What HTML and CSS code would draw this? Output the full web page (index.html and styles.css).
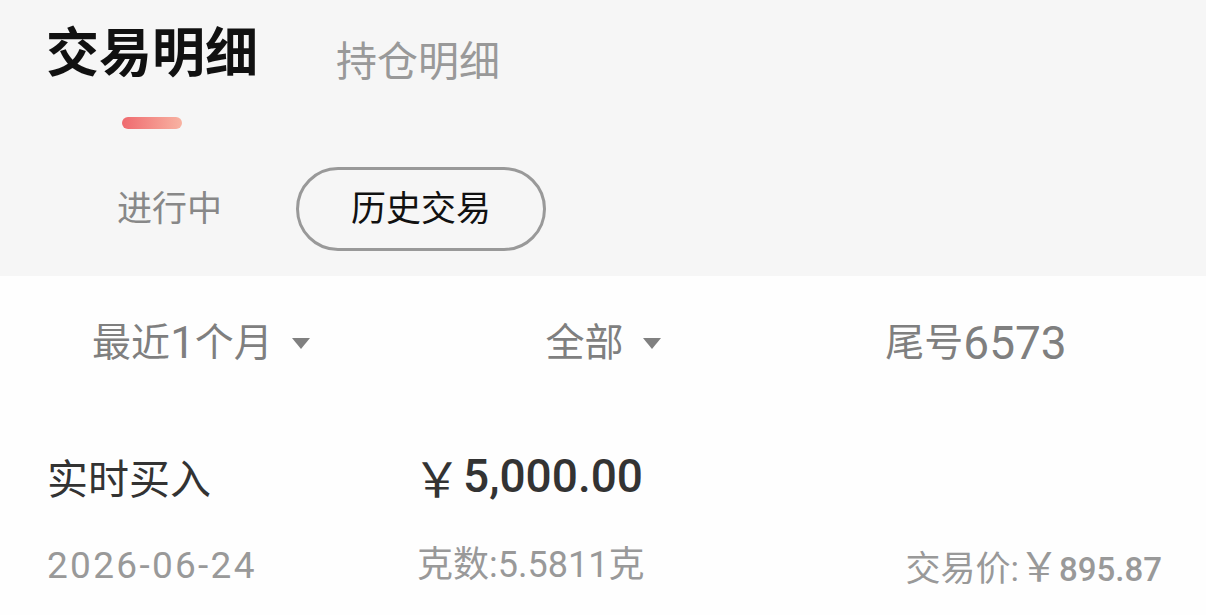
FILE: index.html
```html
<!DOCTYPE html>
<html lang="zh-CN">
<head>
<meta charset="utf-8">
<link rel="stylesheet" href="styles.css">
</head>
<body>
<div class="page">
  <header class="header">
    <nav class="tabs">
      <div class="tab tab-active">
        <span class="tab-label">交易明细</span>
        <span class="tab-indicator"></span>
      </div>
      <div class="tab">
        <span class="tab-label">持仓明细</span>
      </div>
    </nav>
    <div class="subtabs">
      <span class="subtab">进行中</span>
      <span class="subtab subtab-active">历史交易</span>
    </div>
  </header>
  <section class="filters">
    <div class="filter filter-period">最近<span class="num">1</span>个月<span class="caret"></span></div>
    <div class="filter filter-type">全部<span class="caret"></span></div>
    <div class="filter filter-card">尾号<span class="num">6573</span></div>
  </section>
  <section class="record">
    <div class="record-line record-main">
      <span class="col col-left record-title">实时买入</span>
      <span class="col col-mid record-amount"><span class="yen">￥</span>5,000.00</span>
      <span class="col col-right"></span>
    </div>
    <div class="record-line record-sub">
      <span class="col col-left record-date">2026-06-24</span>
      <span class="col col-mid record-weight">克数:<span class="lat">5.5811</span>克</span>
      <span class="col col-right record-price">交易价:<span class="yen-s">￥</span><b class="price">895.87</b></span>
    </div>
  </section>
</div>
</body>
</html>
```

FILE: styles.css
```css
* { box-sizing: border-box; }
html, body { margin: 0; padding: 0; }
body {
  width: 1206px;
  height: 615px;
  overflow: hidden;
  background: #fefefe;
  font-family: Roboto, "Noto Sans CJK SC", sans-serif;
}
.page { display: flex; flex-direction: column; }

.header {
  background: #f6f6f6;
  height: 276px;
  padding-top: 28px;
}
.tabs {
  display: flex;
  align-items: flex-start;
  padding-left: 46px;
  gap: 78px;
}
.tab {
  display: flex;
  flex-direction: column;
  align-items: center;
}
.tab-label {
  font-size: 41px;
  line-height: 1;
  color: #999;
  margin-top: 14px;
}
.tab-active .tab-label {
  font-size: 53px;
  font-weight: 700;
  color: #111;
  margin-top: 0;
}
.tab-indicator {
  width: 60px;
  height: 12px;
  border-radius: 6px;
  margin-top: 36px;
  background: linear-gradient(90deg, #ef6a6f, #f8b3a2);
}
.subtabs {
  display: flex;
  align-items: center;
  padding-left: 62px;
  margin-top: 38px;
  gap: 19px;
}
.subtab {
  font-size: 35px;
  line-height: 1;
  color: #888;
  padding: 22px 52px 21px;
  border: 3px solid transparent;
  border-radius: 42px;
}
.subtab-active {
  color: #111;
  border-color: #999;
}

.filters {
  display: grid;
  grid-template-columns: repeat(3, 1fr);
  height: 140px;
  align-items: center;
  padding-bottom: 6px;
  color: #7f7f7f;
  font-size: 39px;
}
.filter {
  display: flex;
  align-items: center;
  justify-content: center;
  line-height: 1;
}
.filter .num { font-size: 44px; }
.filter-card { padding-right: 58px; }
.filter-card .num { font-size: 46px; }
.caret {
  width: 0;
  height: 0;
  border-left: 9px solid transparent;
  border-right: 9px solid transparent;
  border-top: 11px solid #808080;
  margin-left: 19px;
}

.record {
  display: flex;
  flex-direction: column;
  padding: 0 44px 0 47px;
}
.record-line {
  display: flex;
  align-items: center;
  line-height: 1;
}
.record-main { height: 60px; margin-top: 30px; }
.record-sub { height: 50px; margin-top: 34px; }
.col-left { width: 366px; }
.col-mid { width: 384px; }
.col-right { flex: 1; text-align: right; }
.record-title {
  font-size: 41px;
  color: #333;
  padding-top: 8px;
}
.record-amount {
  font-size: 46px;
  font-weight: 500;
  color: #333;
  display: flex;
  align-items: center;
}
.yen {
  font-family: "Noto Sans CJK SC", sans-serif;
  font-size: 48px;
  font-weight: 400;
  margin-right: 2px;
}
.record-date {
  font-size: 37px;
  color: #999;
  letter-spacing: 2.3px;
}
.record-weight {
  font-size: 36px;
  color: #999;
  padding-left: 4px;
}
.record-price {
  font-size: 35px;
  color: #999;
}
.yen-s {
  font-family: "Noto Sans CJK SC", sans-serif;
  font-size: 40px;
}
.price { font-weight: 500; font-size: 33px; }
```
